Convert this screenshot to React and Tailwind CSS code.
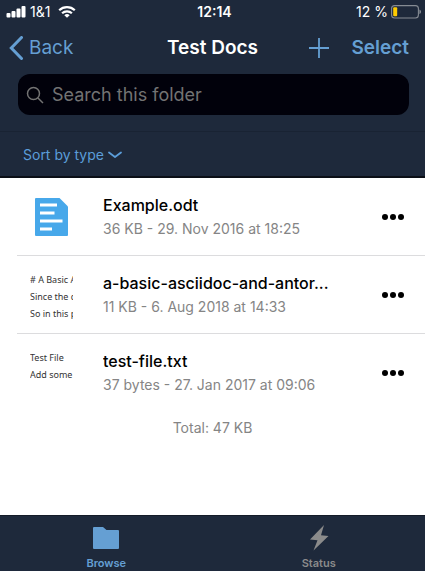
const files = [
  { name: "Example.odt", meta: "36 KB - 29. Nov 2016 at 18:25", preview: null },
  {
    name: "a-basic-asciidoc-and-antor...",
    meta: "11 KB - 6. Aug 2018 at 14:33",
    preview: ["# A Basic A", "Since the c", "So in this p"],
  },
  { name: "test-file.txt", meta: "37 bytes - 27. Jan 2017 at 09:06", preview: ["Test File", "Add some"] },
];

function StatusBar() {
  return (
    <div className="grid h-6 grid-cols-3 items-center px-1 text-[14px] leading-5 text-white">
      <div className="flex items-center gap-1 pl-[2px]">
        <svg width="20" height="12" viewBox="0 0 20 12" fill="currentColor" aria-hidden="true">
          <rect x="0.5" y="7" width="4" height="4.5" rx="1" />
          <rect x="5.5" y="5" width="4" height="6.5" rx="1" />
          <rect x="10.5" y="2.5" width="4" height="9" rx="1" />
          <rect x="15.5" y="0" width="4" height="11.5" rx="1" />
        </svg>
        <span>1&amp;1</span>
        <svg className="ml-1" width="18" height="12" viewBox="0 0 18 12" fill="none" stroke="currentColor" strokeWidth="2.2" aria-hidden="true">
          <path d="M1.2 4.3a11.2 11.2 0 0 1 15.6 0" />
          <path d="M4.1 7.3a7 7 0 0 1 9.8 0" />
          <path d="M9 11.8 6.3 9.3a3.9 3.9 0 0 1 5.4 0z" fill="currentColor" stroke="none" />
        </svg>
      </div>
      <span className="pl-1 text-center font-semibold">12:14</span>
      <div className="flex items-center justify-end gap-[3px]">
        <span>12 %</span>
        <svg width="30" height="14" viewBox="0 0 30 14" aria-hidden="true">
          <rect x="0.6" y="0.6" width="26.8" height="12.4" rx="3" fill="none" stroke="#858b93" strokeWidth="1.1" />
          <rect x="2.2" y="2.3" width="4" height="9" rx="1" fill="#ffcc00" />
          <path d="M28.4 4.5c2.2.8 2.2 3.8 0 4.6z" fill="#858b93" />
        </svg>
      </div>
    </div>
  );
}

function Preview({ lines }) {
  return (
    <div className="h-14 w-[43px] overflow-hidden whitespace-nowrap pt-1 font-['Noto_Sans',sans-serif] text-[9px] leading-[17px] text-[#333]">
      {lines.map((line) => (
        <p key={line}>{line}</p>
      ))}
    </div>
  );
}

function DocumentIcon() {
  return (
    <svg className="ml-[5px]" width="33" height="38" viewBox="0 0 33 38" aria-hidden="true">
      <path d="M1 0h23.5L33 8.5V37a1 1 0 0 1-1 1H1a1 1 0 0 1-1-1V1a1 1 0 0 1 1-1z" fill="#47a8ea" />
      <path d="M5 5.500h17v3H5zM5 13.500h14.500v3H5zM5 21.500h22.500v3H5zM5 29.500h12v3H5z" fill="#fff" />
    </svg>
  );
}

function FileRow({ file, last }) {
  return (
    <li className={`ml-[17px] flex h-[78px] items-center border-b pl-[13px] pr-5 ${last ? "border-transparent" : "border-[#dcdcde]"}`}>
      <div className="w-[73px] shrink-0">{file.preview ? <Preview lines={file.preview} /> : <DocumentIcon />}</div>
      <div className="min-w-0 flex-1">
        <p className="truncate text-[16px] font-medium leading-6 text-black">{file.name}</p>
        <p className="truncate text-[14px] leading-6 text-[#858585]">{file.meta}</p>
      </div>
      <button type="button" aria-label={`More actions for ${file.name}`} className="shrink-0">
        <svg width="24" height="8" viewBox="0 0 24 8" aria-hidden="true">
          <circle cx="4" cy="4" r="3" />
          <circle cx="12" cy="4" r="3" />
          <circle cx="20" cy="4" r="3" />
        </svg>
      </button>
    </li>
  );
}

export default function App() {
  return (
    <div className="flex min-h-screen flex-col bg-white font-['Inter',sans-serif]">
      <header className="border-b-2 border-[#0b0f16] bg-[#1e293b]">
        <StatusBar />
        <nav className="grid h-12 grid-cols-[1fr_auto_1fr] items-center px-4 text-[19px] leading-6 text-[#659fd3]">
          <button type="button" className="-ml-2 flex items-center gap-[6px] justify-self-start">
            <svg width="15" height="24" viewBox="0 0 15 24" fill="none" stroke="currentColor" strokeWidth="3" aria-hidden="true">
              <path d="M13.500 1.500 3.300 12l10.200 10.500" strokeLinecap="round" />
            </svg>
            Back
          </button>
          <h1 className="font-semibold text-white">Test Docs</h1>
          <div className="flex items-center gap-[22px] justify-self-end">
            <button type="button" aria-label="Add">
              <svg width="20" height="20" viewBox="0 0 20 20" fill="none" stroke="currentColor" strokeWidth="1.8" aria-hidden="true">
                <path d="M10 0v20M0 10h20" />
              </svg>
            </button>
            <button type="button" className="font-semibold">Select</button>
          </div>
        </nav>
        <div className="border-b border-[#192333] pb-4 pl-[18px] pr-4 pt-[2px]">
          <label className="flex h-[41px] items-center gap-2 rounded-xl bg-[#01010b] px-2 text-[#737373]">
            <svg className="shrink-0" width="18" height="18" viewBox="0 0 18 18" fill="none" stroke="currentColor" strokeWidth="1.5" aria-hidden="true">
              <circle cx="7.5" cy="7.5" r="6" />
              <path d="m12 12 5 5" />
            </svg>
            <input
              type="text"
              aria-label="Search this folder"
              placeholder="Search this folder"
              className="min-w-0 flex-1 bg-transparent text-[18px] leading-6 text-white outline-none placeholder:text-[#737373]"
            />
          </label>
        </div>
        <div className="flex h-11 items-center px-[23px] pt-[2px]">
          <button type="button" className="flex items-center gap-1 text-[14px] leading-5 text-[#5b9dd9]">
            Sort by type
            <svg width="14" height="8" viewBox="0 0 14 8" fill="none" stroke="currentColor" strokeWidth="1.8" strokeLinecap="round" strokeLinejoin="round" aria-hidden="true">
              <path d="m1 1.5 6 4.500 6-4.500" />
            </svg>
          </button>
        </div>
      </header>

      <main className="flex-1">
        <ul>
          {files.map((file, i) => (
            <FileRow key={file.name} file={file} last={i === files.length - 1} />
          ))}
        </ul>
        <p className="pt-1 text-center text-[14px] leading-6 text-[#858585]">Total: 47 KB</p>
      </main>

      <nav className="grid h-14 grid-cols-2 border-t border-[#141b28] bg-[#1e293b] text-[11px] font-semibold leading-4">
        <a href="#browse" aria-current="page" className="flex flex-col items-center justify-end gap-1 text-[#659fd3]">
          <svg width="26" height="24" viewBox="0 0 26 24" fill="currentColor" aria-hidden="true">
            <path d="M1 0h9l3.500 3H25a1 1 0 0 1 1 1v17a1 1 0 0 1-1 1H1a1 1 0 0 1-1-1V1a1 1 0 0 1 1-1z" />
          </svg>
          Browse
        </a>
        <a href="#status" className="flex flex-col items-center justify-end gap-1 text-[#8b8b8b]">
          <svg width="20" height="26" viewBox="0 0 20 26" fill="currentColor" aria-hidden="true">
            <path d="M15 0 1 14.500l7.500 0.700L4.500 25.500 19.500 11l-7.500-0.700z" />
          </svg>
          Status
        </a>
      </nav>
    </div>
  );
}
